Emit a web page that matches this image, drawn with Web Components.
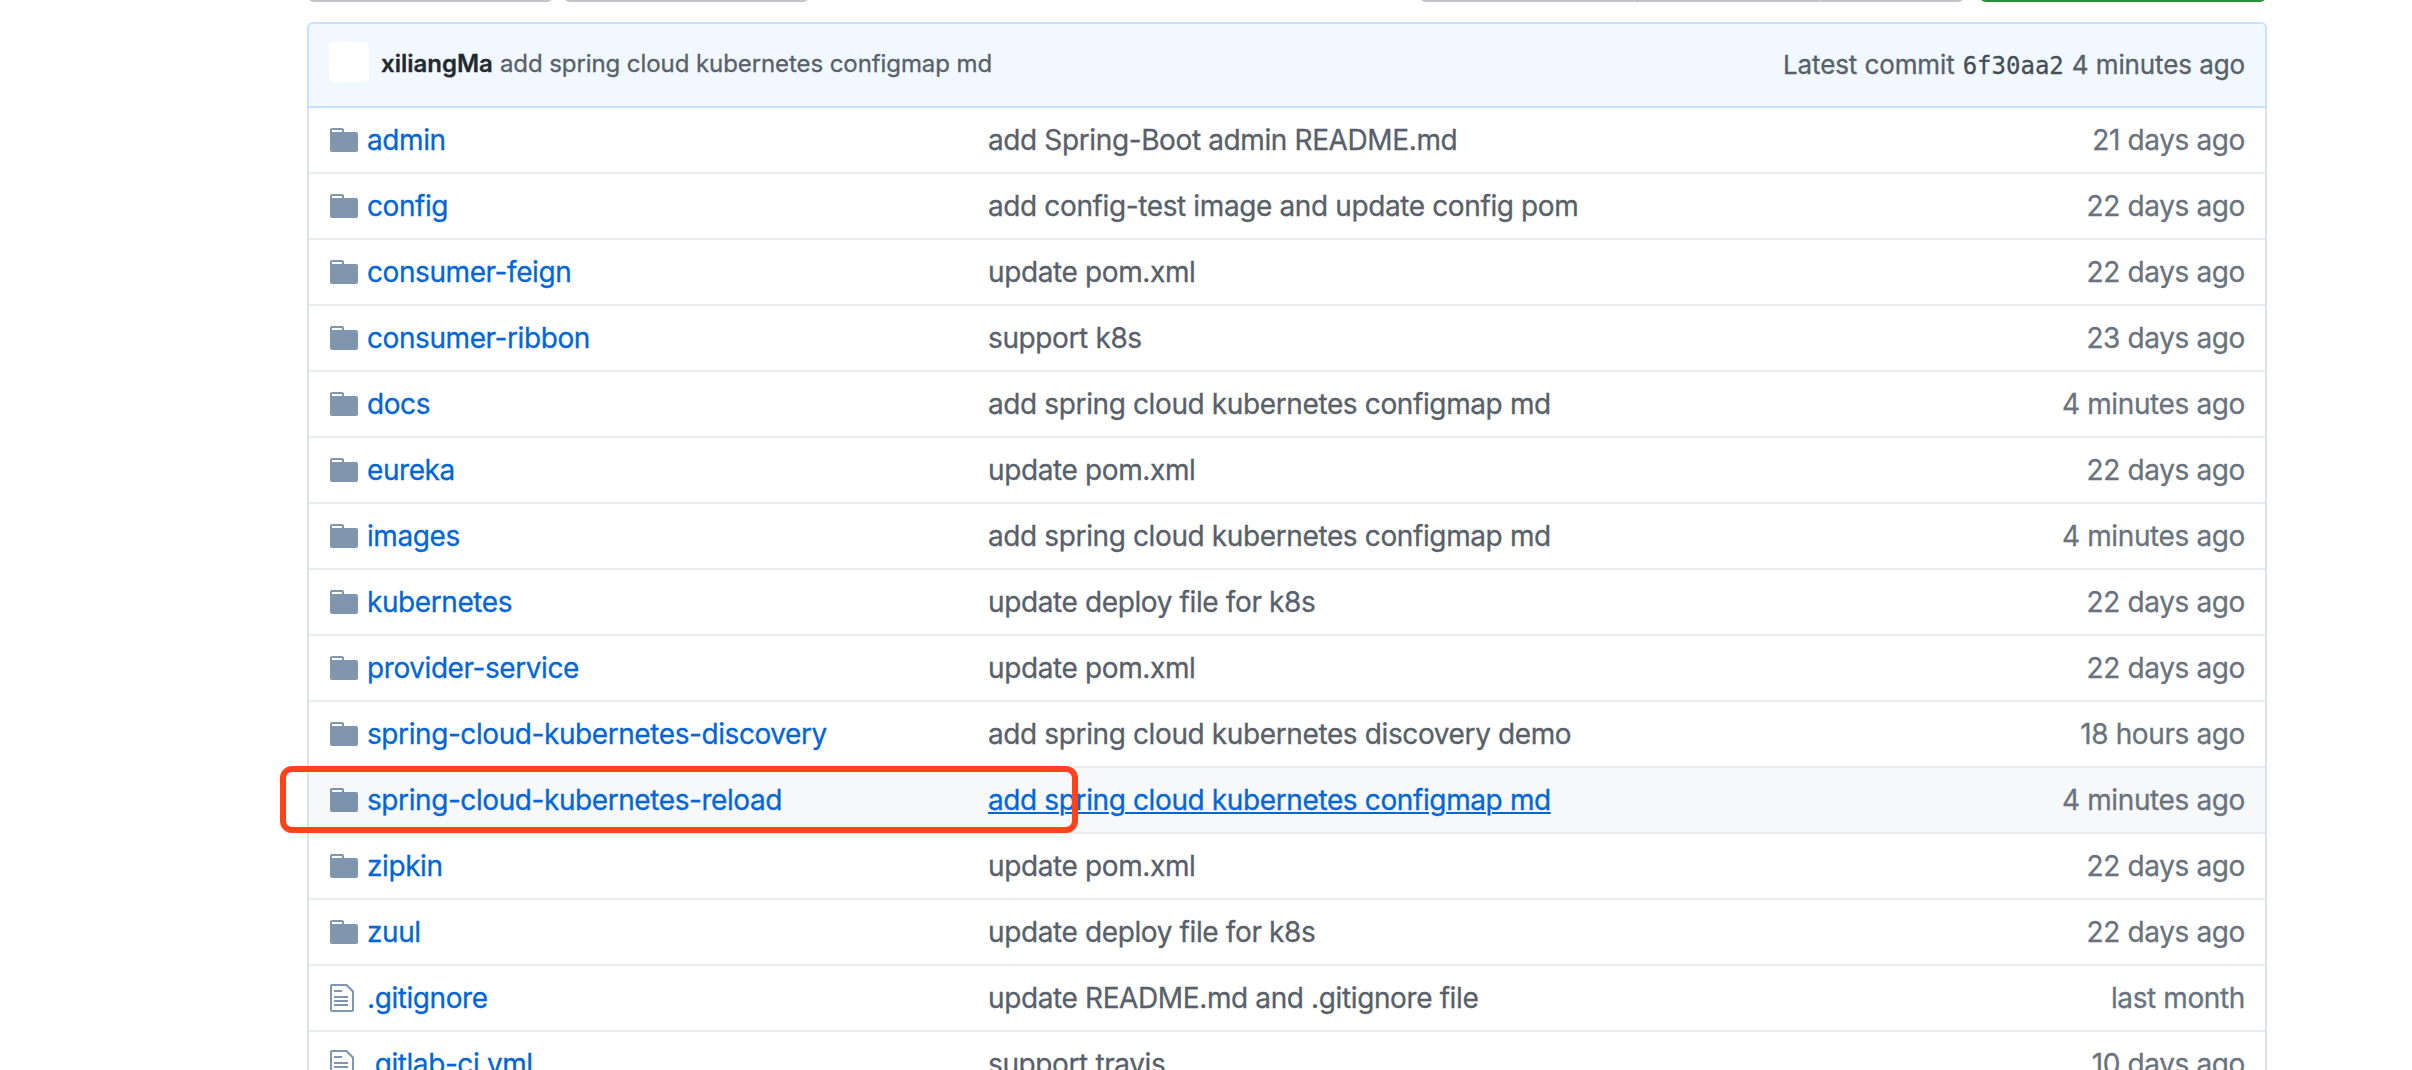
<!DOCTYPE html>
<html lang="en"><head><meta charset="utf-8"><title>Repository files</title>
<style>html,body{margin:0;height:1070px;overflow:hidden;background:#fff}body{font-family:Inter,"Liberation Sans",sans-serif;-webkit-text-stroke:.3px}</style></head>
<body><repo-page></repo-page>
<script>
const FOLDER='<svg width="28" height="32" viewBox="0 0 14 16"><path d="M13 4H7V3c0-.66-.31-1-1-1H1c-.55 0-1 .45-1 1v10c0 .55.45 1 1 1h12c.55 0 1-.45 1-1V5c0-.55-.45-1-1-1zM6 4H1V3h5v1z"/></svg>';
const FILE='<svg width="24" height="32" viewBox="0 0 12 16"><path d="M6 5H2V4h4v1zM2 8h7V7H2v1zm0 2h7V9H2v1zm0 2h7v-1H2v1zm10-7.5V14c0 .55-.45 1-1 1H1c-.55 0-1-.45-1-1V2c0-.55.45-1 1-1h7.5L12 4.5zM11 5L8 2H1v12h10V5z"/></svg>';
class ButtonStrip extends HTMLElement{
  connectedCallback(){
    this.attachShadow({mode:'open'}).innerHTML=`<style>
:host{display:flex;height:2px;overflow:hidden;align-items:flex-end;padding:0 1px}
i{display:block;box-sizing:border-box;height:12px;background:#c2c6ca;border-radius:0 0 6px 6px;flex:none}
.a{width:245px;margin-right:11px}.b{width:245px}
.s{flex:1}
.g{width:544px;display:flex}.g b{border-right:1px solid #a9adb1;height:12px}
.n{width:286px;margin-left:16px;background:#28903c}
</style><i class="a"></i><i class="b"></i><span class="s"></span><i class="g"><b style="width:217px"></b><b style="width:181px;border-color:#d0d3d6"></b></i><i class="n"></i>`;
  }
}
class CommitTease extends HTMLElement{
  connectedCallback(){
    this.attachShadow({mode:'open'}).innerHTML=`<style>
:host{display:flex;box-sizing:border-box;height:86px;border:2px solid #c8e1ff;border-radius:6px 6px 0 0;background:#f1f8ff;padding:18px 20px 0;color:#586069;font-size:24px;line-height:40px;white-space:nowrap}
.av{width:40px;height:40px;border-radius:5px;background:#fff;margin-right:12px}
.u,.m{padding-top:2px}
.u{font-weight:600;color:#24292e;margin-right:7px}
.m{letter-spacing:-.08px}
.r{margin-left:auto;padding-top:3px;font-size:26px;display:flex;align-items:baseline;letter-spacing:-.1px}
code{font:24px/40px "DejaVu Sans Mono",monospace;letter-spacing:0;color:#444d56;margin:0 8px}
</style><span class="av"></span><span class="u"><slot name="user"></slot></span><span class="m"><slot></slot></span><span class="r"><span>Latest commit</span><code><slot name="sha"></slot></code><span><slot name="age"></slot></span></span>`;
  }
}
class FileRow extends HTMLElement{
  connectedCallback(){
    const a=n=>this.getAttribute(n);
    this.attachShadow({mode:'open'}).innerHTML=`<style>
:host{display:flex;box-sizing:border-box;height:66px;border-top:2px solid #eaecef;padding:16px 20px 0 21px;font-size:28px;line-height:32px;white-space:nowrap;letter-spacing:-.38px;color:#586069}
:host([first]){border-top-color:transparent}
:host([active]){background:#f6f8fa}
.i{width:37px;flex:none}svg{display:block;fill:#032f62;opacity:.5}
.n{width:621px;flex:none;color:#0366d6;letter-spacing:-.42px}
.d{margin-left:auto;color:#6a737d}
:host([active]) .m{color:#0366d6;text-decoration:underline;text-decoration-thickness:2px;text-underline-offset:2px}
</style><span class="i">${a('kind')==='file'?FILE:FOLDER}</span><span class="n">${a('name')}</span><span class="m">${a('message')}</span><span class="d">${a('age')}</span>`;
  }
}
class RepoPage extends HTMLElement{
  connectedCallback(){
    const cm='add spring cloud kubernetes configmap md',u='update pom.xml',d='update deploy file for k8s';
    const rows=[['admin','add Spring-Boot admin README.md','21 days ago'],['config','add config-test image and update config pom','22 days ago'],['consumer-feign',u,'22 days ago'],['consumer-ribbon','support k8s','23 days ago'],['docs',cm,'4 minutes ago'],['eureka',u,'22 days ago'],['images',cm,'4 minutes ago'],['kubernetes',d,'22 days ago'],['provider-service',u,'22 days ago'],['spring-cloud-kubernetes-discovery','add spring cloud kubernetes discovery demo','18 hours ago'],['spring-cloud-kubernetes-reload',cm,'4 minutes ago'],['zipkin',u,'22 days ago'],['zuul',d,'22 days ago'],['.gitignore','update README.md and .gitignore file','last month'],['.gitlab-ci.yml','support travis','10 days ago']];
    this.attachShadow({mode:'open'}).innerHTML=`<style>
:host{display:block;width:2412px;height:1070px;overflow:hidden;position:relative;background:#fff}
main{width:1960px;margin-left:307px}
button-strip{margin-bottom:20px}
.list{margin-top:-2px;border:2px solid #dfe2e5;border-top:0}
commit-tease{position:relative}
.mark{position:absolute;left:280px;top:766px;width:798px;height:67px;box-sizing:border-box;border:6px solid #ff431a;border-radius:12px}
</style><main><button-strip></button-strip><commit-tease><span slot="user">xiliangMa</span>${cm}<span slot="sha">6f30aa2</span><span slot="age">4 minutes ago</span></commit-tease><div class="list">${rows.map((r,i)=>`<file-row ${i===0?'first':''} ${i===10?'active':''} kind="${i>12?'file':'folder'}" name="${r[0]}" message="${r[1]}" age="${r[2]}"></file-row>`).join('')}</div></main><div class="mark"></div>`;
  }
}
customElements.define('button-strip',ButtonStrip);
customElements.define('commit-tease',CommitTease);
customElements.define('file-row',FileRow);
customElements.define('repo-page',RepoPage);
</script></body></html>
